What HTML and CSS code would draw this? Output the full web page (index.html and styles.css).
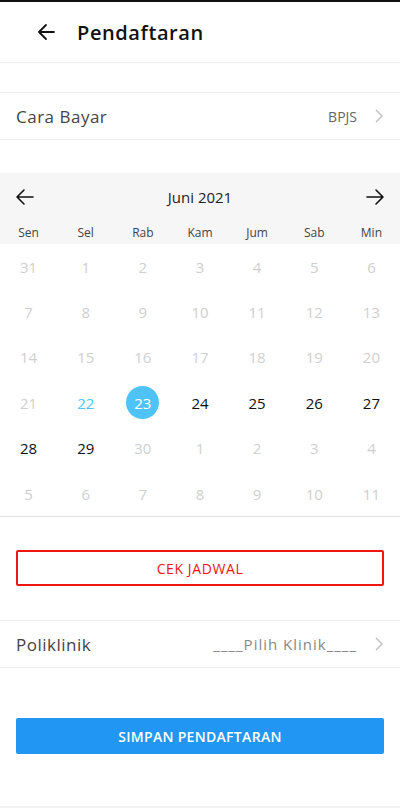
FILE: index.html
```html
<!DOCTYPE html>
<html lang="id">
<head>
<meta charset="utf-8">
<title>Pendaftaran</title>
<link rel="stylesheet" href="styles.css">
</head>
<body>
<div class="page">
  <header class="appbar">
    <svg class="back" width="20" height="20" viewBox="0 0 20 20"><path d="M18 10H3M10 3l-7 7 7 7" fill="none" stroke="#111" stroke-width="1.8" stroke-linecap="round" stroke-linejoin="round"/></svg>
    <h1 class="title">Pendaftaran</h1>
  </header>
  <div class="spacer s1"></div>
  <div class="row">
    <span class="row-label">Cara Bayar</span>
    <span class="row-value">BPJS</span>
    <svg class="chev" width="8" height="14" viewBox="0 0 8 14"><path d="M1 1l6 6-6 6" fill="none" stroke="#c8c8c8" stroke-width="1.6"/></svg>
  </div>
  <section class="calendar">
    <div class="cal-head">
      <div class="cal-nav">
        <svg width="20" height="20" viewBox="0 0 20 20"><path d="M18 10H2M9 3l-7 7 7 7" fill="none" stroke="#111" stroke-width="1.6" stroke-linecap="round" stroke-linejoin="round"/></svg>
        <span class="month">Juni 2021</span>
        <svg width="20" height="20" viewBox="0 0 20 20"><path d="M2 10h16M11 3l7 7-7 7" fill="none" stroke="#111" stroke-width="1.6" stroke-linecap="round" stroke-linejoin="round"/></svg>
      </div>
      <div class="weekdays">
        <span>Sen</span><span>Sel</span><span>Rab</span><span>Kam</span><span>Jum</span><span>Sab</span><span>Min</span>
      </div>
    </div>
    <div class="days">
      <span class="off">31</span><span class="off">1</span><span class="off">2</span><span class="off">3</span><span class="off">4</span><span class="off">5</span><span class="off">6</span>
      <span class="off">7</span><span class="off">8</span><span class="off">9</span><span class="off">10</span><span class="off">11</span><span class="off">12</span><span class="off">13</span>
      <span class="off">14</span><span class="off">15</span><span class="off">16</span><span class="off">17</span><span class="off">18</span><span class="off">19</span><span class="off">20</span>
      <span class="off">21</span><span class="today">22</span><span class="sel"><b>23</b></span><span>24</span><span>25</span><span>26</span><span>27</span>
      <span>28</span><span>29</span><span class="off">30</span><span class="off">1</span><span class="off">2</span><span class="off">3</span><span class="off">4</span>
      <span class="off">5</span><span class="off">6</span><span class="off">7</span><span class="off">8</span><span class="off">9</span><span class="off">10</span><span class="off">11</span>
    </div>
  </section>
  <div class="btn-wrap b1"><button class="btn-outline">CEK JADWAL</button></div>
  <div class="row">
    <span class="row-label">Poliklinik</span>
    <span class="row-value muted">____Pilih Klinik____</span>
    <svg class="chev" width="8" height="14" viewBox="0 0 8 14"><path d="M1 1l6 6-6 6" fill="none" stroke="#c8c8c8" stroke-width="1.6"/></svg>
  </div>
  <div class="btn-wrap b2"><button class="btn-primary">SIMPAN PENDAFTARAN</button></div>
  <div class="bottom-line"></div>
</div>
</body>
</html>
```
FILE: styles.css
```css
* { box-sizing: border-box; }
html, body { margin: 0; padding: 0; background: #fff; }
body {
  font-family: "Open Sans", "Noto Sans", sans-serif;
  color: #222;
  width: 400px;
  overflow: hidden;
}
.page { border-top: 2px solid #111; }
.appbar {
  height: 61px;
  display: flex;
  align-items: center;
  padding-left: 36px;
  gap: 21px;
  border-bottom: 1px solid #efefef;
}
.back { display: block; }
.title {
  margin: 0;
  font-size: 20px;
  font-weight: 600;
  color: #111;
  letter-spacing: 0.6px;
}
.spacer.s1 { height: 29px; }
.row {
  height: 48px;
  display: flex;
  align-items: center;
  padding: 0 16px;
  border-top: 1px solid #eeeeee;
  border-bottom: 1px solid #eeeeee;
}
.row-label {
  flex: 1;
  font-size: 17px;
  color: #444;
  letter-spacing: 0.5px;
}
.row-value {
  font-size: 14px;
  color: #666;
  margin-right: 18px;
}
.row-value.muted { font-size: 15px; color: #888; letter-spacing: 1px; }
.chev { display: block; margin-right: 1px; }
.calendar {
  margin-top: 33px;
  border-bottom: 1px solid #e2e2e2;
}
.cal-head { background: #f6f6f6; }
.cal-nav {
  height: 46px;
  display: flex;
  align-items: center;
  justify-content: space-between;
  padding: 0 15px 0 15px;
  padding-top: 1px;
}
.cal-nav svg { display: block; }
.month { font-size: 15px; color: #222; }
.weekdays {
  height: 25px;
  display: grid;
  grid-template-columns: repeat(7, 1fr);
  align-items: start;
  font-size: 12px;
  color: #444;
  padding-top: 6px;
}
.weekdays span { text-align: center; line-height: 16px; }
.days {
  display: grid;
  grid-template-columns: repeat(7, 1fr);
  grid-auto-rows: 45.4px;
}
.days span {
  display: flex;
  align-items: center;
  justify-content: center;
  font-size: 15px;
  color: #111;
}
.days span.off { color: #cfcfcf; }
.days span.today { color: #4fc3f7; }
.days span.sel b {
  width: 33px;
  height: 33px;
  border-radius: 50%;
  background: #4fc3f7;
  color: #fff;
  font-weight: 400;
  display: flex;
  align-items: center;
  justify-content: center;
}
.btn-wrap { padding: 0 16px; }
.btn-wrap.b1 { padding-top: 33px; padding-bottom: 34px; }
.btn-wrap.b2 { padding-top: 50px; padding-bottom: 52px; }
.btn-outline {
  width: 100%;
  height: 36px;
  border: 2px solid #f01414;
  border-radius: 2px;
  background: #fff;
  color: #f01414;
  font-family: inherit;
  font-size: 14px;
  letter-spacing: 0.6px;
}
.btn-primary {
  width: 100%;
  height: 36px;
  border: none;
  border-radius: 2px;
  background: #2196f3;
  color: #fff;
  font-family: inherit;
  font-size: 14px;
  font-weight: 600;
  letter-spacing: 0.3px;
}
.bottom-line { height: 2px; background: #f2f2f2; }
```
